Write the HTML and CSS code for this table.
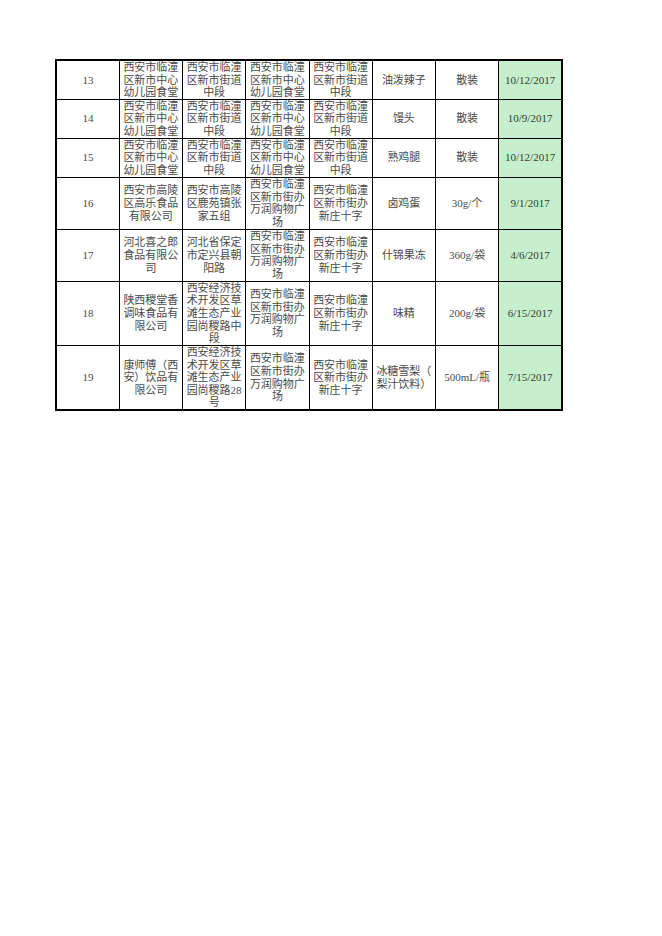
FILE: index.html
```html
<!DOCTYPE html>
<html lang="zh-CN">
<head>
<meta charset="utf-8">
<title>Sheet</title>
<link rel="stylesheet" href="styles.css">
</head>
<body>
<div class="page">
<table class="sheet">
<colgroup>
<col class="c1"><col class="c2"><col class="c3"><col class="c4"><col class="c5"><col class="c6"><col class="c7"><col class="c8">
</colgroup>
<tbody>
<tr class="r3">
<td>13</td><td>西安市临潼区新市中心幼儿园食堂</td><td>西安市临潼区新市街道中段</td><td>西安市临潼区新市中心幼儿园食堂</td><td>西安市临潼区新市街道中段</td><td>油泼辣子</td><td>散装</td><td class="date">10/12/2017</td>
</tr>
<tr class="r3">
<td>14</td><td>西安市临潼区新市中心幼儿园食堂</td><td>西安市临潼区新市街道中段</td><td>西安市临潼区新市中心幼儿园食堂</td><td>西安市临潼区新市街道中段</td><td>馒头</td><td>散装</td><td class="date">10/9/2017</td>
</tr>
<tr class="r3">
<td>15</td><td>西安市临潼区新市中心幼儿园食堂</td><td>西安市临潼区新市街道中段</td><td>西安市临潼区新市中心幼儿园食堂</td><td>西安市临潼区新市街道中段</td><td>熟鸡腿</td><td>散装</td><td class="date">10/12/2017</td>
</tr>
<tr class="r4">
<td>16</td><td>西安市高陵区高乐食品有限公司</td><td>西安市高陵区鹿苑镇张家五组</td><td>西安市临潼区新市街办万润购物广场</td><td>西安市临潼区新市街办新庄十字</td><td>卤鸡蛋</td><td>30g/个</td><td class="date">9/1/2017</td>
</tr>
<tr class="r4">
<td>17</td><td>河北喜之郎食品有限公司</td><td>河北省保定市定兴县朝阳路</td><td>西安市临潼区新市街办万润购物广场</td><td>西安市临潼区新市街办新庄十字</td><td>什锦果冻</td><td>360g/袋</td><td class="date">4/6/2017</td>
</tr>
<tr class="r5a">
<td>18</td><td>陕西稷堂香调味食品有限公司</td><td>西安经济技术开发区草滩生态产业园尚稷路中段</td><td>西安市临潼区新市街办万润购物广场</td><td>西安市临潼区新市街办新庄十字</td><td>味精</td><td>200g/袋</td><td class="date">6/15/2017</td>
</tr>
<tr class="r5b">
<td>19</td><td>康师傅（西安）饮品有限公司</td><td>西安经济技术开发区草滩生态产业园尚稷路28号</td><td>西安市临潼区新市街办万润购物广场</td><td>西安市临潼区新市街办新庄十字</td><td>冰糖雪梨（<br>梨汁饮料）</td><td>500mL/瓶</td><td class="date">7/15/2017</td>
</tr>
</tbody>
</table>
</div>
</body>
</html>
```

FILE: styles.css
```css
html, body {
  margin: 0;
  padding: 0;
  background: #ffffff;
}

.page {
  padding: 59px 0 0 55px;
}

.sheet {
  border-collapse: collapse;
  table-layout: fixed;
  width: 506px;
  border: 2px solid #000;
  font-family: "Liberation Serif", "Noto Sans CJK SC", serif;
  font-size: 11px;
  line-height: 12.6px;
  color: #4a4a4a;
}

.sheet col { width: 63.25px; }

.sheet td {
  border: 1px solid #000;
  padding: 0 1px;
  text-align: center;
  vertical-align: middle;
  word-break: break-all;
  line-break: anywhere;
  overflow: hidden;
}

.r3 { height: 39px; }
.r4 { height: 52px; }
.r5a { height: 64px; }
.r5b { height: 65px; }

.sheet td.date {
  background: #c6efce;
  color: #34402f;
}
```
